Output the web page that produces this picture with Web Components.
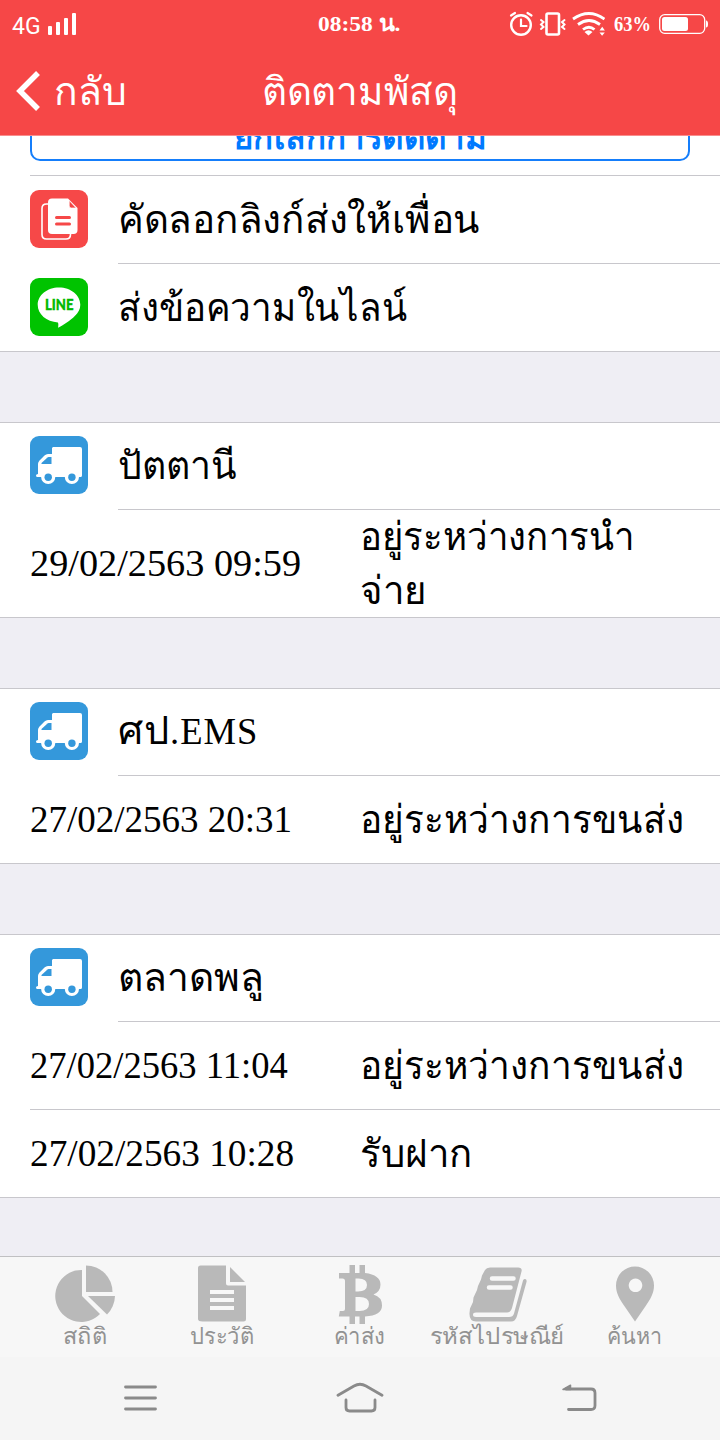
<!DOCTYPE html>
<html lang="th">
<head>
  <meta charset="utf-8">
  <title>ติดตามพัสดุ</title>
  <style>
    body {
      margin: 0;
      width: 720px;
      height: 1440px;
      overflow: hidden;
      background: #efeef4;
      color: #000;
      font-family: "Noto Sans", sans-serif;
    }
  </style>
</head>
<body>
  <parcel-screen></parcel-screen>

  <script>
    // text squeezed or stretched to the width given in its w attribute
    class FitText extends HTMLElement {
      constructor() {
        super();
        this.attachShadow({ mode: 'open' });
        this.shadowRoot.innerHTML = `
          <style>
            :host { display: block; white-space: nowrap; flex: none; }
            span { display: inline-block; transform-origin: left center; }
          </style>
          <span><slot></slot></span>
        `;
      }

      connectedCallback() {
        const w = Number(this.getAttribute('w'));
        const span = this.shadowRoot.querySelector('span');
        this.style.width = `${w}px`;
        span.style.transform = `scaleX(${w / span.offsetWidth})`;
      }
    }

    class StatusBar extends HTMLElement {
      constructor() {
        super();
        this.attachShadow({ mode: 'open' });
        this.shadowRoot.innerHTML = `
          <style>
            :host {
              display: grid;
              grid-template-columns: 1fr auto 1fr;
              align-items: center;
              height: 48px;
              padding: 0 11px 0 12px;
              color: #fff;
            }
            .side { display: flex; align-items: center; }
            .right { justify-content: flex-end; }
            svg { display: block; flex: none; }
            .net { font: 23px/28px Roboto, sans-serif; margin-top: 6px; }
            .num { font: bold 22px/28px "Liberation Serif", serif; }
            .clock { margin-right: 3px; }
          </style>
          <div class="side">
            <fit-text class="net" w="29">4G</fit-text>
            <svg width="30" height="24" viewBox="0 0 30 24" fill="#fff" style="margin-left:6px">
              <rect x="1" y="14" width="4" height="9" rx="1"/>
              <rect x="9" y="10" width="4" height="13" rx="1"/>
              <rect x="17" y="6" width="4" height="17" rx="1"/>
              <rect x="25" y="1" width="4" height="22" rx="1"/>
            </svg>
          </div>
          <fit-text class="num clock" w="82">08:58 น.</fit-text>
          <div class="side right">
            <svg width="97" height="32" viewBox="508 8 97 32" fill="none" stroke="#fff" stroke-width="2.2" stroke-linecap="round">
              <circle cx="521" cy="25" r="9.8" stroke-width="2.4"/>
              <path d="M521 19.500V26h5.500M511 15.500l4-2.500M527.500 13l4 2.500"/>
              <rect x="546.500" y="13.500" width="12.500" height="21" rx="1.500" stroke-width="2.600"/>
              <path stroke-width="2" d="M541 20l2.500 2-2.500 2.500 2.500 2.500-2.500 2M564.500 20l-2.500 2 2.500 2.500-2.500 2.500 2.500 2"/>
              <path stroke-width="2.800" stroke-linecap="butt" d="M573 19q16-11 31.500 0M578 24.500q11-8 22 0M583 29.500q6-4.500 11.500 0"/>
              <path fill="#fff" stroke="none" d="M584.500 32q4-3.500 8 0l-4 3.500zM599.500 30.500l2.700-3.700 2.700 3.700zM599.500 32.500h5.300l-2.700 3.200z"/>
            </svg>
            <fit-text class="num" w="37" style="margin-left:9px">63%</fit-text>
            <svg width="50" height="24" viewBox="0 0 50 24" style="margin-left:8px">
              <rect x=".7" y="2.700" width="45" height="18.600" rx="5" fill="none" stroke="#fff" stroke-width="1.300"/>
              <rect x="3" y="5" width="26" height="14" rx="2.500" fill="#fff"/>
              <path d="M47 8.500q2 0 2 3.500t-2 3.500z" fill="#fff"/>
            </svg>
          </div>
        `;
      }
    }

    class NavBar extends HTMLElement {
      constructor() {
        super();
        this.attachShadow({ mode: 'open' });
        this.shadowRoot.innerHTML = `
          <style>
            :host {
              display: grid;
              grid-template-columns: 1fr auto 1fr;
              align-items: center;
              height: 88px;
              box-sizing: border-box;
              border-bottom: 1px solid #f98d8d;
              padding: 0 16px 2px;
              color: #fff;
              font-size: 39px;
              line-height: 44px;
            }
            .back { display: flex; align-items: center; gap: 13px; }
            fit-text { margin-top: -1px; }
          </style>
          <div class="back">
            <svg width="25" height="42" viewBox="0 0 25 42" fill="none" stroke="#fff" stroke-width="5.500">
              <path d="M22 3L4 21l18 18"/>
            </svg>
            <fit-text w="73">กลับ</fit-text>
          </div>
          <fit-text w="196"><slot></slot></fit-text>
        `;
      }
    }

    const icons = {
      copy: `
        <rect width="58" height="58" rx="9" fill="#f64848"/>
        <path d="M19 14h-2.500q-4.500 0-4.500 4.500v26q0 4.500 4.500 4.500H36q4.500 0 4.500-4.500V42" fill="none" stroke="#fff" stroke-width="1.600"/>
        <path d="M22 8.500h16l9.500 9.500v22q0 4-4 4H22q-4 0-4-4V12.500q0-4 4-4z" fill="#fff"/>
        <path d="M39.200 10.500v5.500q0 2 2 2h5z" fill="#f64848" stroke="#fff" stroke-width=".7"/>
        <path d="M26.500 27.500h13M26.500 34h13" stroke="#f64848" stroke-width="3" stroke-linecap="round"/>`,
      line: `
        <rect width="58" height="58" rx="9" fill="#00c300"/>
        <path d="M29 9.500c11.800 0 21.300 7.700 21.300 17.300 0 4.500-2 8-5.500 11.200-4.200 4.300-11.500 9-16.800 11.800.5-2 .5-4.300-.1-5.400C16.500 44 7.700 36.200 7.700 26.800 7.700 17.200 17.200 9.500 29 9.500z" fill="#fff"/>
        <text x="15" y="32.300" textLength="28.500" lengthAdjust="spacingAndGlyphs" font-family="Lato, sans-serif" font-weight="900" font-size="15" fill="#00b900" stroke="#00b900" stroke-width=".4">LINE</text>`,
      truck: `
        <rect width="58" height="58" rx="9" fill="#3498db"/>
        <path fill="#fff" d="M23 11h27q2 0 2 2v26.500q0 1.500-1.500 1.500H49a7 7 0 0 1-14.200 0H25.300a7 7 0 0 1-14.200 0H7.500q-1.500 0-1.500-1.500t2-1.500V28q0-2 1.500-3.500l5-5q1.500-1.500 3.500-1.500h4V12z"/>
        <path fill="#3498db" d="M11.500 28v-1l6-5.500 1-.5h3v7z"/>
        <circle cx="18.200" cy="41.300" r="3.700" fill="#3498db"/>
        <circle cx="41.900" cy="41.300" r="3.700" fill="#3498db"/>`
    };

    class ListCard extends HTMLElement {
      constructor() {
        super();
        this.attachShadow({ mode: 'open' });
        this.shadowRoot.innerHTML = `
          <style>
            :host {
              display: block;
              background: #fff;
              border-top: 1px solid #c8c7cc;
              border-bottom: 1px solid #c8c7cc;
            }
          </style>
          <slot></slot>
        `;
      }
    }

    class IconRow extends HTMLElement {
      constructor() {
        super();
        this.attachShadow({ mode: 'open' });
        this.shadowRoot.innerHTML = `
          <style>
            :host { display: flex; height: 87px; padding-left: 30px; }
            svg { display: block; flex: none; margin: 13px 30px 0 0; }
            .label {
              flex: 1;
              display: flex;
              align-items: center;
              border-bottom: 1px solid #c8c7cc;
              font-size: 39px;
              line-height: 60px;
              box-sizing: border-box;
              padding-bottom: 4px;
            }
            :host([last]) .label { border-bottom: 0; }
            :host([tall]) { height: 88px; }
            :host([tall]) svg, :host([last]) svg { margin-top: 14px; }
          </style>
          <svg width="58" height="58" viewBox="0 0 58 58">${icons[this.getAttribute('icon')]}</svg>
          <div class="label"><slot></slot></div>
        `;
      }
    }

    class EventRow extends HTMLElement {
      constructor() {
        super();
        this.attachShadow({ mode: 'open' });
        this.shadowRoot.innerHTML = `
          <style>
            :host { display: flex; height: 87px; padding-left: 30px; }
            .cells {
              flex: 1;
              display: grid;
              grid-template-columns: 330px 1fr;
              align-items: center;
            }
            .time { font: 37px/54px "Liberation Serif", serif; }
            .state { font-size: 39px; line-height: 54px; margin-top: -4px; }
            :host([divided]) { height: 88px; }
            :host([divided]) .cells { border-bottom: 1px solid #c8c7cc; }
            :host([double]) { height: 107px; }
          </style>
          <div class="cells">
            <div class="time"><slot name="time"></slot></div>
            <div class="state"><slot></slot></div>
          </div>
        `;
      }
    }

    // bottom edge of the cancel button, the rest is scrolled under the nav bar
    class CancelButton extends HTMLElement {
      constructor() {
        super();
        this.attachShadow({ mode: 'open' });
        this.shadowRoot.innerHTML = `
          <style>
            :host {
              display: flex;
              align-items: flex-end;
              height: 39px;
              overflow: hidden;
              background: #fff;
              padding: 0 30px 14px;
              box-sizing: border-box;
            }
            button {
              flex: 1;
              height: 60px;
              display: flex;
              align-items: flex-end;
              justify-content: center;
              box-sizing: border-box;
              padding: 0 0 5px;
              border: 2px solid #157efb;
              border-radius: 10px;
              background: #fff;
              color: #007aff;
              font: bold 34px/36px "Noto Sans", sans-serif;
            }
          </style>
          <button><fit-text w="252"><slot></slot></fit-text></button>
        `;
      }
    }

    const tabs = [
      {
        label: 'สถิติ', w: 44,
        icon: `<path d="M27 7v26l18 18A26 26 0 1 1 27 7z"/>
          <path d="M31 2.500a26.500 26.500 0 0 1 26.500 26.500H31z"/>
          <path d="M33 33h27q-.5 11-8 18.500z"/>`
      },
      {
        label: 'ประวัติ', w: 64,
        icon: `<path d="M8.500 2.500H34v18q0 2 2 2h18V56q0 2.500-2.500 2.500h-41Q6 58.500 6 56V5q0-2.500 2.500-2.500z"/>
          <path d="M38 4l15 15H38z"/>
          <path d="M18 29h24M18 37h24M18 45h24" stroke="#f7f7f7" stroke-width="4"/>`
      },
      {
        label: 'ค่าส่ง', w: 51,
        icon: `<path d="M19.500 2h5.500v8h4.500V2H35v8q15.500 2 15.500 11.500 0 7-7 10 8.500 2.500 8.500 11Q52 52.500 35 53.500V61h-5.500v-7.500H25V61h-5.500v-7.500H8.800l1-5.500h3.200q2 0 2-2V18q0-2.500-2.500-2.500H9V10h10.500z"/>
          <path fill="#f7f7f7" d="M25.500 15.500h3q8.500 0 8.500 6.500t-9 6.500h-2.500zM25.500 34h4q9.500 0 9.500 7t-9.500 7h-4z"/>`
      },
      {
        label: 'รหัสไปรษณีย์', w: 134,
        icon: `<g transform="translate(-3 0)"><path d="M26 4.500H54Q58.500 4.500 57.500 8.500L48 45Q46.500 49.500 43 49.500H12Q9 49.500 9 51.700T12 54H45Q49 54 50 50.500L59 17.500Q59.500 15.500 61.300 16T62.500 19L53 53Q51.500 58.500 47 58.500H12Q5 58.500 5.500 50L6 45.500 9 39 9.500 34.500 13 27 14 23 17 16.500 18 12.500 21 7Q22.500 4.500 26 4.500z"/>
          <path d="M28 15.500h21.500M25 24.500h21.500" stroke="#f7f7f7" stroke-width="4.500" stroke-linecap="round"/></g>`
      },
      {
        label: 'ค้นหา', w: 55,
        icon: `<path fill-rule="evenodd" d="M30 3.500a19 19 0 0 1 19 19c0 8-4 14-8 20L30 58.500 19 42.500c-4-6-8-12-8-20a19 19 0 0 1 19-19zm.500 12a6.800 6.800 0 1 0 .01 0z"/>`
      }
    ];

    class TabBar extends HTMLElement {
      constructor() {
        super();
        this.attachShadow({ mode: 'open' });
        this.shadowRoot.innerHTML = `
          <style>
            :host {
              display: grid;
              grid-template-columns: repeat(5, 137.5px);
              justify-content: center;
              height: 101px;
              box-sizing: border-box;
              padding-right: 1px;
              border-top: 1px solid #c0c0c2;
              background: #f7f7f7;
              color: #929292;
              font-size: 23px;
              line-height: 32px;
            }
            .tab { display: flex; flex-direction: column; align-items: center; padding-top: 6px; }
            svg { fill: #b9b9b9; overflow: visible; }
            fit-text { margin-top: -6px; }
          </style>
          ${tabs.map(tab => `
            <div class="tab">
              <svg width="60" height="62" viewBox="0 0 60 62">${tab.icon}</svg>
              <fit-text w="${tab.w}">${tab.label}</fit-text>
            </div>
          `).join('')}
        `;
      }
    }

    class SystemKeys extends HTMLElement {
      constructor() {
        super();
        this.attachShadow({ mode: 'open' });
        this.shadowRoot.innerHTML = `
          <style>
            :host {
              display: grid;
              grid-template-columns: repeat(3, 219px);
              justify-content: center;
              justify-items: center;
              align-items: center;
              height: 83px;
              box-sizing: border-box;
              padding-bottom: 1px;
              background: #f5f5f5;
            }
            svg { fill: none; stroke: #8a8a8a; stroke-width: 2.8; stroke-linecap: round; stroke-linejoin: round; }
          </style>
          <svg width="50" height="32" viewBox="0 0 50 32"><path d="M9.500 5h30M9.500 16h30M9.500 27h30"/></svg>
          <svg width="50" height="32" viewBox="0 0 50 32"><path d="M3 13.300L19 4q6-3.500 12 0l16 9.300M11 18v7.500q0 3.500 3.500 3.500h22q3.500 0 3.500-3.500V18"/></svg>
          <svg width="50" height="32" viewBox="0 0 50 32"><path d="M12 7h25q4 0 4 4v12.500q0 4-4 4H14.500"/><path d="M9 7.500l7.500-4.300V7.500z" fill="#8a8a8a" stroke-width="1.500"/></svg>
        `;
      }
    }

    class ParcelScreen extends HTMLElement {
      constructor() {
        super();
        this.attachShadow({ mode: 'open' });
        this.shadowRoot.innerHTML = `
          <style>
            :host { display: flex; flex-direction: column; height: 1440px; }
            header { background: #f64747; flex: none; }
            main { flex: 1; display: flex; flex-direction: column; gap: 70px; overflow: hidden; }
            .share {
              background: #fff;
              border-bottom: 1px solid #c8c7cc;
            }
            .rule { height: 1px; margin-left: 30px; background: #c8c7cc; }
            .mixed { display: flex; align-items: baseline; gap: 1px; }
            .latin { font-family: "Liberation Serif", serif; font-size: 37px; letter-spacing: 1px; }
          </style>
          <header>
            <status-bar></status-bar>
            <nav-bar>ติดตามพัสดุ</nav-bar>
          </header>
          <main>
            <div class="share">
              <cancel-button>ยกเลิกการติดตาม</cancel-button>
              <div class="rule"></div>
              <icon-row icon="copy" tall><fit-text w="362">คัดลอกลิงก์ส่งให้เพื่อน</fit-text></icon-row>
              <icon-row icon="line" last><fit-text w="289">ส่งข้อความในไลน์</fit-text></icon-row>
            </div>
            <list-card>
              <icon-row icon="truck"><fit-text w="119">ปัตตานี</fit-text></icon-row>
              <event-row double>
                <fit-text slot="time" w="271">29/02/2563 09:59</fit-text>
                <fit-text w="275">อยู่ระหว่างการนำ</fit-text>
                <fit-text w="67">จ่าย</fit-text>
              </event-row>
            </list-card>
            <list-card>
              <icon-row icon="truck">
                <div class="mixed"><fit-text w="51">ศป</fit-text><fit-text class="latin" w="88">.EMS</fit-text></div>
              </icon-row>
              <event-row>
                <fit-text slot="time" w="262">27/02/2563 20:31</fit-text>
                <fit-text w="324">อยู่ระหว่างการขนส่ง</fit-text>
              </event-row>
            </list-card>
            <list-card>
              <icon-row icon="truck"><fit-text w="146">ตลาดพลู</fit-text></icon-row>
              <event-row divided>
                <fit-text slot="time" w="258">27/02/2563 11:04</fit-text>
                <fit-text w="324">อยู่ระหว่างการขนส่ง</fit-text>
              </event-row>
              <event-row>
                <fit-text slot="time" w="264">27/02/2563 10:28</fit-text>
                <fit-text w="113">รับฝาก</fit-text>
              </event-row>
            </list-card>
          </main>
          <tab-bar></tab-bar>
          <system-keys></system-keys>
        `;
      }
    }

    customElements.define('list-card', ListCard);
    customElements.define('icon-row', IconRow);
    customElements.define('event-row', EventRow);
    customElements.define('cancel-button', CancelButton);
    customElements.define('status-bar', StatusBar);
    customElements.define('nav-bar', NavBar);
    customElements.define('tab-bar', TabBar);
    customElements.define('system-keys', SystemKeys);
    customElements.define('parcel-screen', ParcelScreen);
    // last, so that it measures text inside elements already laid out
    customElements.define('fit-text', FitText);
  </script>
</body>
</html>
